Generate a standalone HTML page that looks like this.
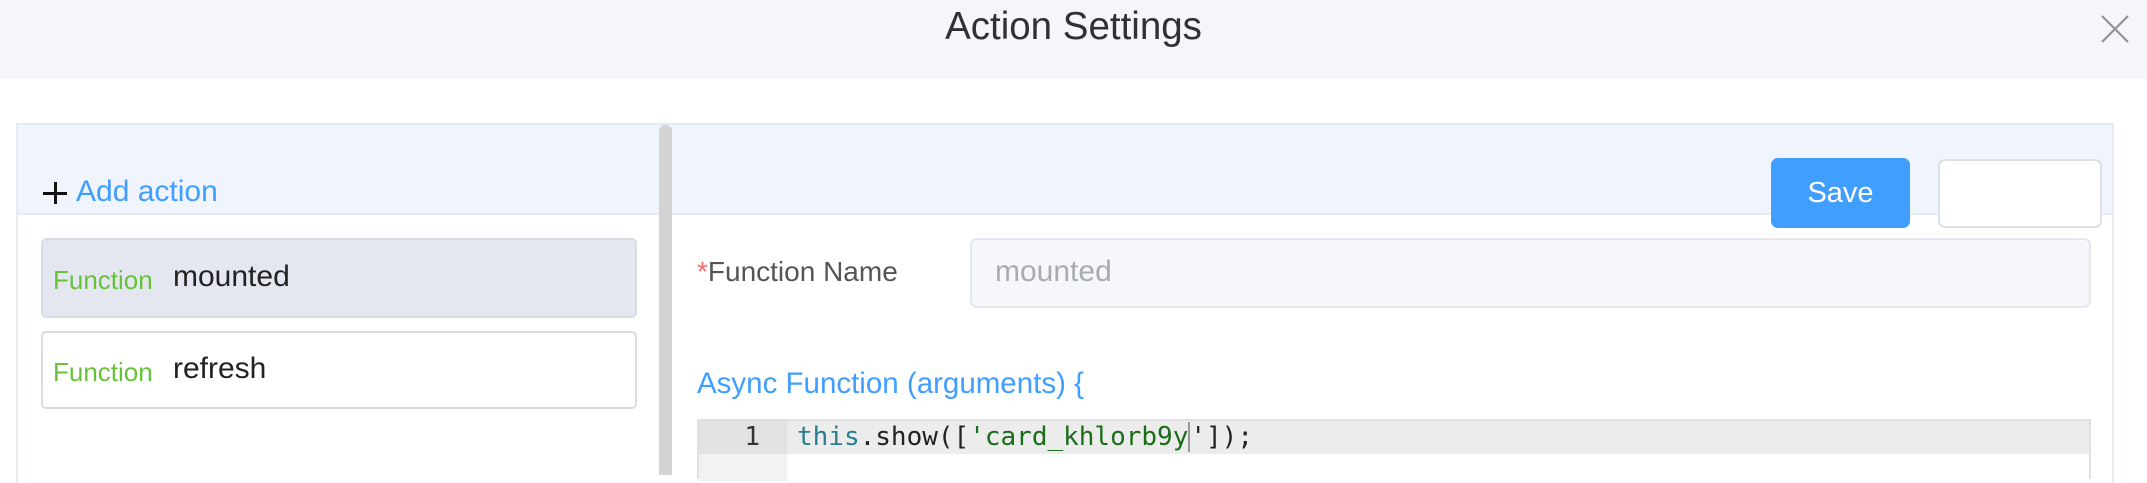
<!DOCTYPE html>
<html><head><meta charset="utf-8"><style>
*{margin:0;padding:0;box-sizing:border-box}
body{width:2147px;height:470px;overflow:hidden;background:#fff;font-family:"Liberation Sans",Arial,sans-serif;position:relative}
.a{position:absolute;white-space:nowrap}
</style></head><body>
<div class="a" style="left:0;top:0;width:2147px;height:79px;background:#f5f6fa"></div>
<div class="a" style="left:0;top:0;width:2147px;height:54px;line-height:54px;text-align:center;font-size:38.5px;color:#303133">Action Settings</div>
<svg class="a" style="left:2100px;top:14px" width="30" height="30" viewBox="0 0 30 30"><path d="M2 2L28 28M28 2L2 28" stroke="#909399" stroke-width="2.2"/></svg>

<div class="a" style="left:16px;top:123px;width:2098px;height:360px;border:2px solid #e6eaf2;border-bottom:none"></div>
<div class="a" style="left:18px;top:125px;width:2094px;height:90px;background:#f0f4fc;border-bottom:2px solid #e6eaf2"></div>
<div class="a" style="left:43px;top:182px;width:24px;height:22px">
<div class="a" style="left:0;top:10px;width:24px;height:3px;background:#111"></div>
<div class="a" style="left:10.5px;top:0;width:3px;height:22px;background:#111"></div></div>
<div class="a" style="left:76px;top:174px;font-size:30px;line-height:36px;color:#409eff">Add action</div>

<div class="a" style="left:659px;top:125px;width:13px;height:350px;background:#d4d4d4;border-radius:6px 6px 0 0"></div>

<div class="a" style="left:41px;top:238px;width:596px;height:80px;background:#e4e7ef;border:2px solid #d8dce5;border-radius:5px"></div>
<div class="a" style="left:53px;top:265px;font-size:26px;color:#67c23a">Function</div>
<div class="a" style="left:173px;top:260px;font-size:30px;color:#222">mounted</div>
<div class="a" style="left:41px;top:331px;width:596px;height:78px;background:#fff;border:2px solid #d8dce5;border-radius:5px"></div>
<div class="a" style="left:53px;top:357px;font-size:26px;color:#67c23a">Function</div>
<div class="a" style="left:173px;top:352px;font-size:30px;color:#222">refresh</div>

<div class="a" style="left:1771px;top:158px;width:139px;height:70px;background:#409eff;border-radius:7px;color:#fff;font-size:29px;line-height:70px;text-align:center">Save</div>
<div class="a" style="left:1938px;top:159px;width:164px;height:69px;background:#fff;border:2px solid #dcdfe6;border-radius:7px"></div>

<div class="a" style="left:697px;top:256px;font-size:28px;color:#555"><span style="color:#f56c6c">*</span>Function Name</div>
<div class="a" style="left:970px;top:238px;width:1121px;height:70px;background:#f5f7fa;border:2px solid #e4e7ed;border-radius:7px"></div>
<div class="a" style="left:995px;top:255px;font-size:30px;color:#a8abb2">mounted</div>

<div class="a" style="left:697px;top:367px;font-size:29.5px;color:#409eff">Async Function (arguments) {</div>

<div class="a" style="left:697px;top:419px;width:1394px;height:60px;border:2px solid #e0e0e0;border-bottom:none;background:#fff"></div>
<div class="a" style="left:699px;top:421px;width:88px;height:60px;background:#f2f2f2"></div>
<div class="a" style="left:699px;top:421px;width:88px;height:33px;background:#e2e2e2"></div>
<div class="a" style="left:787px;top:421px;width:1302px;height:33px;background:#ececec"></div>
<div class="a" style="left:730px;top:421px;width:30px;text-align:right;font-family:'DejaVu Sans Mono',monospace;font-size:26px;line-height:33px;color:#333">1</div>
<div class="a" style="left:797px;top:421px;font-family:'DejaVu Sans Mono',monospace;font-size:26px;line-height:33px;color:#222"><span style="color:#2a7e90">this</span>.show([<span style="color:#1a6e1a">'card_khlorb9y</span><span style="border-left:2px solid #999">'</span>]);</div>
</body></html>
